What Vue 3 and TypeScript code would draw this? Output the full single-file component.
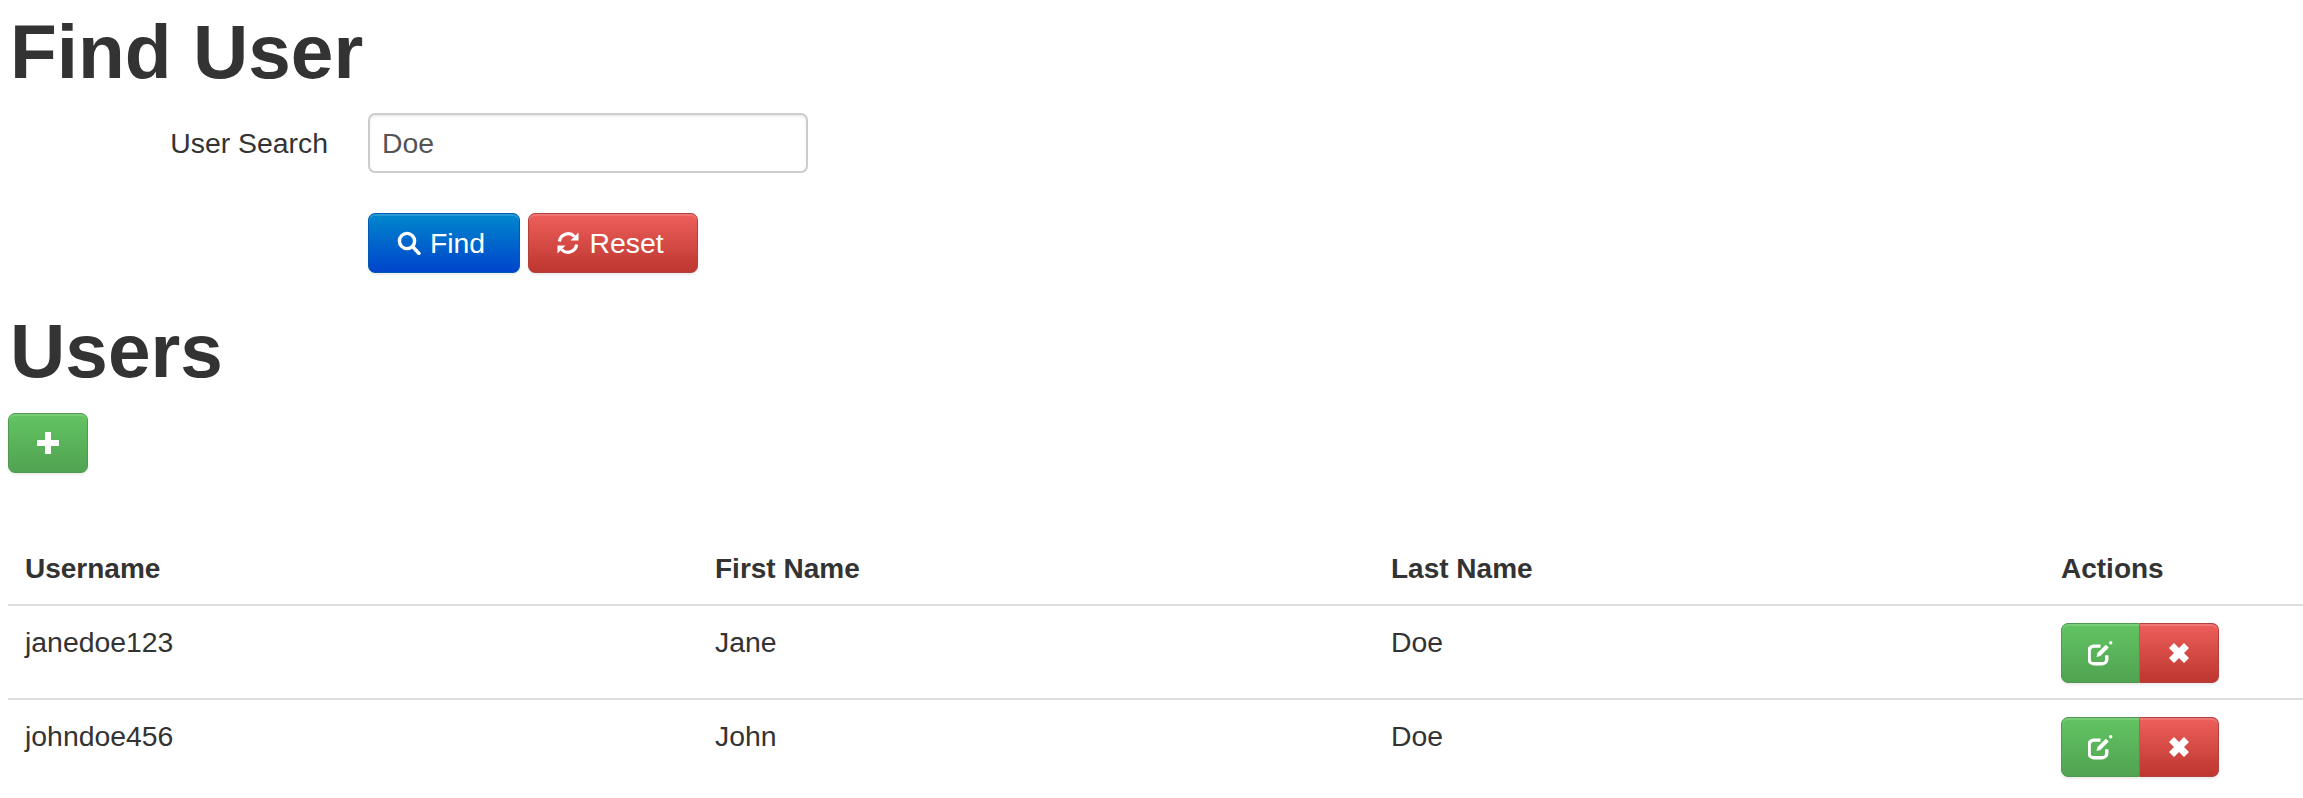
<template>
  <div class="page">
    <h1 class="title">Find User</h1>
    <form class="search-form" @submit.prevent>
      <div class="form-row">
        <label class="form-label" for="user-search">User Search</label>
        <input id="user-search" v-model="search" class="form-input" type="text" />
      </div>
      <div class="form-actions">
        <button class="btn btn-primary" type="button">
          <svg class="icon" viewBox="0 0 24 24" fill="none" stroke="currentColor" stroke-width="3.4">
            <circle cx="10" cy="10" r="7.6" />
            <path d="M15.5 15.5L22 22.5" stroke-linecap="round" />
          </svg>
          Find
        </button>
        <button class="btn btn-danger" type="button">
          <svg class="icon" viewBox="0 0 24 24" fill="none" stroke="currentColor" stroke-width="3.2">
            <path d="M3.4 10.5A8.8 8.8 0 0 1 18.5 5.5" />
            <path d="M20.6 13.5A8.8 8.8 0 0 1 5.5 18.5" />
            <path d="M22.5 1.5V9.5H14.5z" fill="currentColor" stroke="none" />
            <path d="M1.5 22.5V14.5H9.5z" fill="currentColor" stroke="none" />
          </svg>
          Reset
        </button>
      </div>
    </form>

    <h1 class="title users-title">Users</h1>
    <button class="btn btn-success btn-add" type="button">
      <svg class="icon icon-plus" viewBox="0 0 22 22" fill="currentColor">
        <path d="M8 0h6v8h8v6h-8v8H8v-8H0V8h8z" />
      </svg>
    </button>

    <table class="users-table">
      <thead>
        <tr>
          <th class="col-user">Username</th>
          <th class="col-first">First Name</th>
          <th class="col-last">Last Name</th>
          <th>Actions</th>
        </tr>
      </thead>
      <tbody>
        <tr v-for="user in users" :key="user.username">
          <td>{{ user.username }}</td>
          <td>{{ user.firstName }}</td>
          <td>{{ user.lastName }}</td>
          <td class="actions-cell">
            <div class="btn-group">
              <button class="btn btn-success btn-icon" type="button">
                <svg class="icon icon-edit" viewBox="2 1 22 22" fill="none" stroke="currentColor">
                  <path d="M18.5 13.5V17a4 4 0 0 1-4 4H7a4 4 0 0 1-4-4V9.5a4 4 0 0 1 4-4h6" stroke-width="3" />
                  <path d="M9.5 15l.8-3.4 7.4-7.4 2.6 2.6-7.4 7.4z" fill="currentColor" stroke="none" />
                  <circle cx="22" cy="2.6" r="1.5" fill="currentColor" stroke="none" />
                </svg>
              </button>
              <button class="btn btn-danger btn-icon" type="button">
                <svg class="icon icon-remove" viewBox="0 0 22 22" fill="currentColor">
                  <path d="M6 1l5 5 5-5 5 5-5 5 5 5-5 5-5-5-5 5-5-5 5-5-5-5z" />
                </svg>
              </button>
            </div>
          </td>
        </tr>
      </tbody>
    </table>
  </div>
</template>

<script setup lang="ts">
import { ref } from 'vue';

interface User {
  username: string;
  firstName: string;
  lastName: string;
}

const search = ref('Doe');

const users = ref<User[]>([
  { username: 'janedoe123', firstName: 'Jane', lastName: 'Doe' },
  { username: 'johndoe456', firstName: 'John', lastName: 'Doe' }
]);
</script>

<style>
html,
body {
  margin: 0;
  background: #fff;
  overflow: hidden;
}
</style>

<style scoped>
.page {
  padding-left: 8px;
  font-family: "Liberation Sans", Arial, sans-serif;
  font-size: 28.4px;
  color: #333;
}

.title {
  margin: 0;
  padding: 2px 0 0 2px;
  font-size: 76.6px;
  font-weight: 700;
  line-height: 100px;
}

.search-form {
  margin-top: 11px;
}

.form-row {
  display: flex;
  align-items: center;
  height: 60px;
}

.form-label {
  width: 320px;
  text-align: right;
}

.form-input {
  box-sizing: border-box;
  width: 440px;
  height: 60px;
  margin-left: 40px;
  padding: 0 12px;
  border: 2px solid #ccc;
  border-radius: 7px;
  outline: none;
  font: inherit;
  color: #555;
  box-shadow: inset 0 2px 2px rgba(0, 0, 0, 0.075);
}

.form-actions {
  display: flex;
  gap: 8px;
  margin-top: 40px;
  margin-left: 360px;
}

.btn {
  display: inline-flex;
  align-items: center;
  justify-content: center;
  gap: 9px;
  box-sizing: border-box;
  height: 60px;
  padding: 0 6px 0 0;
  border: 1px solid transparent;
  border-radius: 7px;
  font: inherit;
  color: #fff;
  box-shadow: inset 0 2px 0 rgba(255, 255, 255, 0.15), 0 2px 2px rgba(0, 0, 0, 0.075);
}

.btn-primary {
  width: 152px;
  border-color: #0059b3;
  background: linear-gradient(to bottom, #0088cc, #0044cc);
}

.btn-danger {
  width: 170px;
  border-color: #b3403b;
  background: linear-gradient(to bottom, #ee5f5b, #bd362f);
}

.btn-success {
  border-color: #4f9a4f;
  background: linear-gradient(to bottom, #62c462, #51a351);
}

.icon {
  width: 24px;
  height: 24px;
  flex: none;
}

.users-title {
  margin-top: 26px;
}

.btn-add {
  display: flex;
  width: 80px;
  margin-top: 12px;
  padding: 0;
}

.icon-plus {
  width: 22px;
  height: 22px;
}

.users-table {
  width: 2295px;
  margin-top: 61px;
  border-collapse: collapse;
  table-layout: fixed;
}

th,
td {
  padding: 0 17px;
  text-align: left;
  font-size: 28.4px;
}

th {
  height: 70px;
  border-bottom: 2px solid #ddd;
  font-size: 28px;
  font-weight: 700;
}

td {
  box-sizing: border-box;
  height: 94px;
  padding-top: 20px;
  vertical-align: top;
  border-bottom: 2px solid #ddd;
}

tbody tr:last-child td {
  border-bottom: none;
}

.col-user {
  width: 656px;
}

.col-first {
  width: 642px;
}

.col-last {
  width: 636px;
}

td.actions-cell {
  padding-top: 17px;
}

.btn-group {
  display: flex;
}

.btn-icon {
  width: 79px;
  padding: 0;
}

.btn-group .btn-success {
  border-radius: 7px 0 0 7px;
}

.btn-group .btn-danger {
  border-left: none;
  border-radius: 0 7px 7px 0;
}

.icon-edit {
  width: 25px;
  height: 25px;
}

.icon-remove {
  width: 22px;
  height: 22px;
}
</style>
